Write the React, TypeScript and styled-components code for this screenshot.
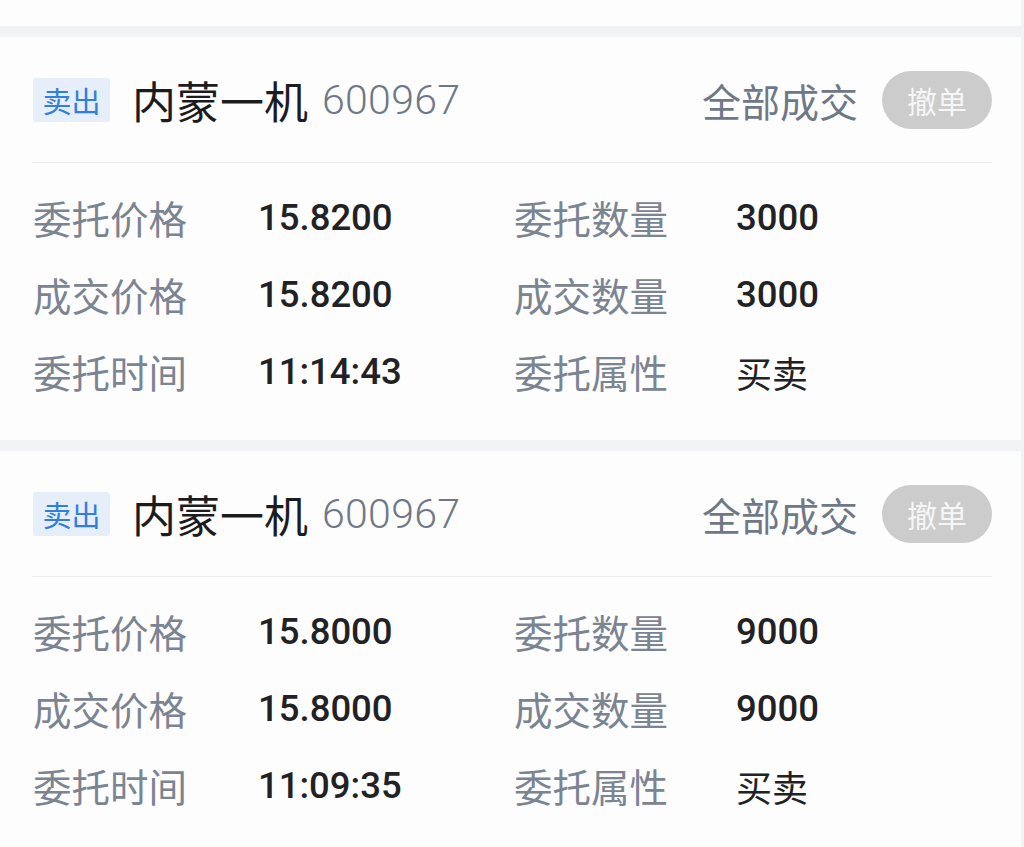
import React from "react";
import styled, { createGlobalStyle } from "styled-components";

const Global = createGlobalStyle`
  html, body { margin: 0; padding: 0; background: #f2f3f7; }
  body { font-family: "Noto Sans CJK SC", "Noto Sans", sans-serif; overflow: hidden; }
  * { box-sizing: border-box; }
`;

const Page = styled.div`
  width: 1024px;
  height: 847px;
  overflow: hidden;
  display: flex;
  flex-direction: column;
  gap: 11px;
  background: #f2f3f7;
`;

const TopStub = styled.div`
  flex-shrink: 0;
  height: 26px;
  background: #fdfdfe;
  margin-right: 3px;
`;

const Card = styled.section`
  background: #fdfdfe;
  margin-right: 3px;
  padding: 0 29px 30px 32px;
  flex-shrink: 0;
`;

const Header = styled.div`
  display: flex;
  align-items: center;
  height: 58px;
  margin-top: 34px;
  margin-bottom: 33px;
`;

const Tag = styled.span`
  display: inline-flex;
  align-items: center;
  justify-content: center;
  width: 77px;
  height: 44px;
  margin-left: 1px;
  border-radius: 3px;
  background: #e6eefa;
  color: #2f7fe0;
  font-size: 29px;
  line-height: 1;
`;

const Name = styled.span`
  margin-left: 22px;
  font-size: 44px;
  color: #1c1c1e;
  line-height: 1;
`;

const Code = styled.span`
  margin-left: 14px;
  font-family: Roboto, "Noto Sans", sans-serif;
  font-size: 41px;
  font-weight: 300;
  color: #6e7886;
  line-height: 1;
  letter-spacing: 0.3px;
`;

const Status = styled.span`
  margin-left: auto;
  font-size: 39px;
  color: #6f7885;
  line-height: 1;
`;

const CancelButton = styled.button`
  margin-left: 24px;
  width: 110px;
  height: 58px;
  border: none;
  border-radius: 29px;
  background: #cccccc;
  color: #f6f6f6;
  font-family: "Noto Sans CJK SC", sans-serif;
  font-size: 30px;
  line-height: 1;
  padding: 0;
`;

const Divider = styled.div`
  height: 1px;
  background: #eceef1;
`;

const Grid = styled.div`
  display: grid;
  grid-template-columns: 225px 256px 222px 1fr;
  grid-auto-rows: 77px;
  align-items: center;
  margin-top: 16px;
  padding-left: 1px;
`;

const Label = styled.span`
  font-size: 38.5px;
  color: #7b8491;
  line-height: 1;
`;

const Value = styled.span<{ $cjk?: boolean }>`
  font-family: ${(p) =>
    p.$cjk ? `"Noto Sans CJK SC", sans-serif` : `Roboto, "Noto Sans", sans-serif`};
  font-size: ${(p) => (p.$cjk ? "36px" : "36.5px")};
  font-weight: ${(p) => (p.$cjk ? 400 : 500)};
  padding-top: ${(p) => (p.$cjk ? "0" : "2px")};
  color: #222224;
  line-height: 1;
`;

type Order = {
  entrustPrice: string;
  entrustQty: string;
  dealPrice: string;
  dealQty: string;
  time: string;
  attr: string;
};

const orders: Order[] = [
  {
    entrustPrice: "15.8200",
    entrustQty: "3000",
    dealPrice: "15.8200",
    dealQty: "3000",
    time: "11:14:43",
    attr: "买卖",
  },
  {
    entrustPrice: "15.8000",
    entrustQty: "9000",
    dealPrice: "15.8000",
    dealQty: "9000",
    time: "11:09:35",
    attr: "买卖",
  },
];

function OrderCard({ o }: { o: Order }) {
  return (
    <Card>
      <Header>
        <Tag>卖出</Tag>
        <Name>内蒙一机</Name>
        <Code>600967</Code>
        <Status>全部成交</Status>
        <CancelButton>撤单</CancelButton>
      </Header>
      <Divider />
      <Grid>
        <Label>委托价格</Label>
        <Value>{o.entrustPrice}</Value>
        <Label>委托数量</Label>
        <Value>{o.entrustQty}</Value>
        <Label>成交价格</Label>
        <Value>{o.dealPrice}</Value>
        <Label>成交数量</Label>
        <Value>{o.dealQty}</Value>
        <Label>委托时间</Label>
        <Value>{o.time}</Value>
        <Label>委托属性</Label>
        <Value $cjk>{o.attr}</Value>
      </Grid>
    </Card>
  );
}

export default function App() {
  return (
    <Page>
      <Global />
      <TopStub />
      {orders.map((o, i) => (
        <OrderCard key={i} o={o} />
      ))}
    </Page>
  );
}
